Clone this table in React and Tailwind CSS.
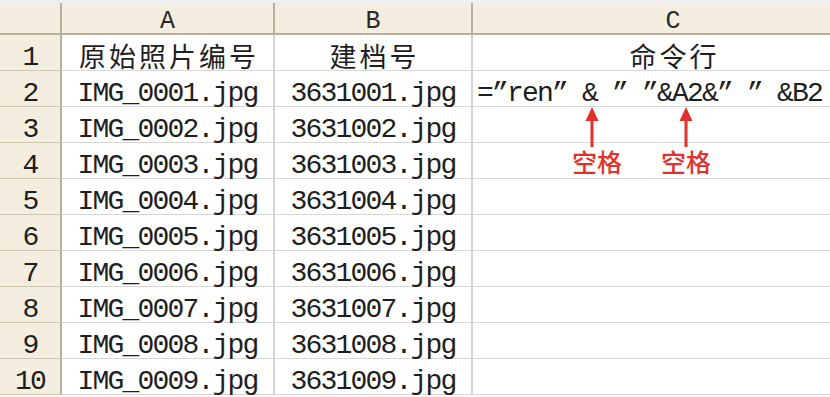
import React from "react";

const MONO = "font-['Liberation_Mono',monospace] text-[28px] tracking-[-1.8px]";

function Arrow({ className }) {
  return (
    <svg className={className} width="14" height="40" viewBox="0 0 14 40">
      <polygon points="7,0 0.5,14 13.5,14" fill="#e2312b" />
      <rect x="5.5" y="12" width="3" height="28" fill="#e2312b" />
    </svg>
  );
}

export default function App() {
  const body = [];
  for (let i = 2; i <= 10; i++) {
    body.push({
      n: i,
      a: `IMG_000${i - 1}.jpg`,
      b: `363100${i - 1}.jpg`,
      c: i === 2 ? "=”ren” & ” ”&A2&” ” &B2" : "",
    });
  }

  return (
    <div className="relative w-[830px] h-[397px] overflow-hidden bg-white text-[#1e1e1e]">
      <div className="h-[3px] bg-[#eef0f1]" />
      {/* column header */}
      <div className="flex h-[32px] bg-[#f4eee0] border-b-2 border-[#b8b09a]">
        <div className="w-[62px] shrink-0 border-r-2 border-[#b8b09a]" />
        <div className="w-[213px] shrink-0 border-r-2 border-[#b8b09a] flex items-end justify-center font-['Liberation_Mono',monospace] text-[25px] leading-[22px] text-[#2a2a2a]">
          A
        </div>
        <div className="w-[198px] shrink-0 border-r-2 border-[#b8b09a] flex items-end justify-center font-['Liberation_Mono',monospace] text-[25px] leading-[22px] text-[#2a2a2a]">
          B
        </div>
        <div className="w-[400px] shrink-0 flex items-end justify-center font-['Liberation_Mono',monospace] text-[25px] leading-[22px] text-[#2a2a2a]">
          C
        </div>
      </div>

      {/* row 1 */}
      <div className="flex h-[36px]">
        <div className={`w-[62px] shrink-0 bg-[#f4eee0] border-r-2 border-b border-r-[#b8b09a] border-b-[#cfc7b0] flex items-end justify-center leading-[24px] ${MONO}`}>
          1
        </div>
        <div className="w-[213px] shrink-0 border-r-2 border-b border-r-[#d3d3d3] border-b-[#d8d8d8] flex items-end justify-center pl-[3px] font-['Noto_Sans_CJK_SC',sans-serif] text-[27px] leading-[28px] tracking-[3px]">
          原始照片编号
        </div>
        <div className="w-[198px] shrink-0 border-r-2 border-b border-r-[#d3d3d3] border-b-[#d8d8d8] flex items-end justify-center pl-[3px] font-['Noto_Sans_CJK_SC',sans-serif] text-[27px] leading-[28px] tracking-[3px]">
          建档号
        </div>
        <div className="w-[400px] shrink-0 border-b border-b-[#d8d8d8] flex items-end justify-center pl-[3px] font-['Noto_Sans_CJK_SC',sans-serif] text-[27px] leading-[28px] tracking-[3px]">
          命令行
        </div>
      </div>

      {body.map((r) => (
        <div key={r.n} className="flex h-[36px]">
          <div className={`w-[62px] shrink-0 bg-[#f4eee0] border-r-2 border-b border-r-[#b8b09a] border-b-[#cfc7b0] flex items-end justify-center leading-[24px] ${MONO}`}>
            {r.n}
          </div>
          <div className={`w-[213px] shrink-0 border-r-2 border-b border-r-[#d3d3d3] border-b-[#d8d8d8] flex items-end justify-center leading-[24px] ${MONO}`}>
            {r.a}
          </div>
          <div className={`w-[198px] shrink-0 border-r-2 border-b border-r-[#d3d3d3] border-b-[#d8d8d8] flex items-end justify-center leading-[24px] ${MONO}`}>
            {r.b}
          </div>
          <div className={`w-[400px] shrink-0 border-b border-b-[#d8d8d8] flex items-end pl-[4px] whitespace-pre leading-[24px] ${MONO}`}>
            {r.c}
          </div>
        </div>
      ))}

      {/* annotations */}
      <Arrow className="absolute left-[585px] top-[107px]" />
      <Arrow className="absolute left-[679px] top-[107px]" />
      <div className="absolute left-[572px] top-[149px] font-['Noto_Sans_CJK_SC',sans-serif] text-[25px] leading-[25px] font-medium text-[#e2312b]">
        空格
      </div>
      <div className="absolute left-[661px] top-[149px] font-['Noto_Sans_CJK_SC',sans-serif] text-[25px] leading-[25px] font-medium text-[#e2312b]">
        空格
      </div>
    </div>
  );
}
